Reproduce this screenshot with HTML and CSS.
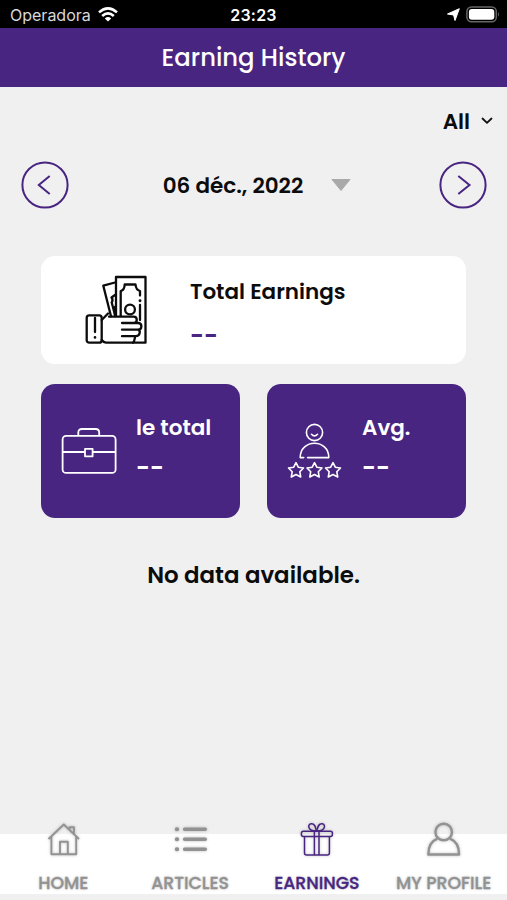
FILE: index.html
```html
<!DOCTYPE html>
<html lang="fr">
<head>
    <meta charset="UTF-8">
    <meta name="viewport" content="width=device-width, initial-scale=1.0">
    <title>Earning History</title>
    <link rel="stylesheet" href="styles.css">
</head>
<body>

    <!-- Status bar -->
    <div class="status-bar">
        <div class="carrier">
            <span class="carrier-name">Operadora</span>
            <svg width="20" height="15" viewBox="0 0 20 15" fill="none" stroke="#fff" stroke-width="2.6">
                <path d="M1 5.4 Q10 -2.6 19 5.4"/>
                <path d="M4.2 9 Q10 3.8 15.8 9"/>
                <path d="M10 14.6 L6.8 11.4 Q10 8.8 13.2 11.4 Z" fill="#fff" stroke="none"/>
            </svg>
        </div>
        <span class="time">23:23</span>
        <div class="status-icons">
            <svg width="13" height="13" viewBox="0 0 13 13">
                <path d="M12.3 0.7 L8 12.5 L6.6 7 L0.5 6 Z" fill="#fff" stroke="#fff" stroke-width="1" stroke-linejoin="round"/>
            </svg>
            <svg width="34" height="17" viewBox="0 0 34 17">
                <rect x="0.9" y="1" width="29.4" height="14.8" rx="4.5" fill="none" stroke="#656565" stroke-width="1.5"/>
                <rect x="2.9" y="3" width="25.4" height="10.8" rx="3" fill="#fff"/>
                <path d="M32 6 Q34 8.4 32 10.8 Z" fill="#656565"/>
            </svg>
        </div>
    </div>

    <!-- Header -->
    <header class="header">
        <h1>Earning History</h1>
    </header>

    <main class="content">
        <div class="filter">
            <span class="filter-text">All</span>
            <svg width="12" height="8" viewBox="0 0 12 8" fill="none" stroke="#111" stroke-width="1.8" stroke-linecap="round" stroke-linejoin="round">
                <path d="M1.5 1.5 L6 5.8 L10.5 1.5"/>
            </svg>
        </div>

        <!-- Date navigation -->
        <div class="date-row">
            <button class="arrow-button">
                <svg width="48" height="48" viewBox="0 0 48 48">
                    <circle cx="24" cy="24" r="22.6"/>
                    <path d="M28.7 15 L17.8 24 L28.7 33"/>
                </svg>
            </button>
            <div class="date">
                <span class="date-text">06 déc., 2022</span>
                <svg width="20" height="12" viewBox="0 0 20 12">
                    <path d="M1 0.5 H19 L10 11.5 Z" fill="#a9a9a9" stroke="#a9a9a9" stroke-linejoin="round"/>
                </svg>
            </div>
            <button class="arrow-button">
                <svg width="48" height="48" viewBox="0 0 48 48">
                    <circle cx="24" cy="24" r="22.6"/>
                    <path d="M19.3 15 L30.5 24 L19.3 33"/>
                </svg>
            </button>
        </div>

        <!-- Totals -->
        <div class="total-card">
            <svg class="money-icon" width="64" height="72" viewBox="0 0 64 72" fill="none" stroke="#0c0c0c" stroke-width="2.3" stroke-linecap="round" stroke-linejoin="round">
                <path d="M32 42 V3 H61.5 V68.7 H22 Q19.5 68.5 17.7 66"/>
                <path d="M36.7 42 V17 Q40.5 16 40.7 10.5 H51.5 Q52 16 56 17 V21.5"/>
                <path d="M56 31 V46"/>
                <path d="M56 26.6 V26.8" stroke-width="2.8"/>
                <circle cx="46" cy="35.5" r="4.9"/>
                <path d="M31 8.5 L19.3 11.7 L27 42.3"/>
                <path d="M31 21 L27.5 23.5 Q29.5 26 27.7 28.5 L31 41"/>
                <path d="M31 33 V41"/>
                <path d="M17.7 46 L24 39.5"/>
                <path d="M25 42.7 H49.5 C54 42.7 53.5 49 50 49 H38 M50 49 H54 C58.5 49 58.5 55.7 54 55.7 H38 M54 55.7 C57 56.5 56 62.2 52 62.2 H38 M52 62.2 C50 62.5 51.5 66.5 49 68.7"/>
                <rect x="2.7" y="41.4" width="15" height="27.3" rx="2.5"/>
                <path d="M11 44 V58"/>
                <path d="M11 63.3 V63.5" stroke-width="2.6"/>
            </svg>
            <div class="total-info">
                <div class="label">Total Earnings</div>
                <div class="value purple">--</div>
            </div>
        </div>

        <div class="small-cards">
            <div class="small-card">
                <svg width="56" height="48" viewBox="0 0 56 48" fill="none" stroke="#fff" stroke-width="1.8" stroke-linejoin="round">
                    <rect x="1.6" y="8.9" width="53" height="37" rx="3.5"/>
                    <path d="M17.3 8.7 V5.5 Q17.3 2 21 2 H34.5 Q38.2 2 38.2 5.5 V8.7"/>
                    <path d="M1.3 25 H23.7 M32 25 H54.7"/>
                    <rect x="24" y="21.9" width="7.6" height="7.4"/>
                </svg>
                <div class="small-info">
                    <div class="label">le total</div>
                    <div class="value">--</div>
                </div>
            </div>
            <div class="small-card">
                <svg width="56" height="56" viewBox="0 0 56 56" fill="none" stroke="#fff" stroke-width="1.6" stroke-linecap="round" stroke-linejoin="round">
                    <circle cx="27.5" cy="9.5" r="8.1"/>
                    <path d="M24.5 11.3 Q27.5 14.5 30.5 11.3"/>
                    <path d="M16.7 34.6 H13.2 C13.2 15.5 41.8 15.5 41.8 34.6 H20.6"/>
                    <path id="star" d="M9 39.6 L11.3 44.2 L16.5 45 L12.8 48.7 L13.7 54 L9 51.5 L4.3 54 L5.2 48.7 L1.5 45 L6.7 44.2 Z"/>
                    <use href="#star" x="18.5"/>
                    <use href="#star" x="37"/>
                </svg>
                <div class="small-info">
                    <div class="label">Avg.</div>
                    <div class="value">--</div>
                </div>
            </div>
        </div>

        <p class="no-data">No data available.</p>
    </main>

    <!-- Bottom tabs -->
    <nav class="tabs">
        <a class="tab">
            <svg width="36" height="36" viewBox="0 0 36 36" fill="none" stroke="currentColor" stroke-width="1.9" stroke-linejoin="round">
                <path d="M3.5 18 L18.8 3.5 L34 18"/>
                <path d="M6.4 16 V33.3 H31.2 V16"/>
                <path d="M15 33.3 V20.7 H22.8 V33.3"/>
                <path d="M24.5 8.2 V6.2 H29 V12.7"/>
            </svg>
            <span>HOME</span>
        </a>
        <a class="tab">
            <svg width="36" height="36" viewBox="0 0 36 36" fill="none" stroke="currentColor" stroke-width="3.5" stroke-linecap="round">
                <path d="M12.6 8.3 H33.3 M12.6 18.3 H33.3 M12.6 28.3 H33.3"/>
                <path d="M4.8 8.3 H5.2 M4.8 18.3 H5.2 M4.8 28.3 H5.2" stroke-width="4"/>
            </svg>
            <span>ARTICLES</span>
        </a>
        <a class="tab active">
            <svg width="36" height="36" viewBox="0 0 36 36" fill="none" stroke="currentColor" stroke-width="1.5" stroke-linejoin="round">
                <rect x="2.4" y="10.2" width="31" height="5.2" rx="2"/>
                <path d="M5.5 15.4 V32 Q5.5 34 7.5 34 H28.4 Q30.4 34 30.4 32 V15.4"/>
                <path d="M15.4 10.4 V34 M20 10.4 V34"/>
                <path d="M17 10 C8.5 10 8.2 3.3 12.2 2.7 C16 2.3 16.5 6.3 17.5 10"/>
                <path d="M18.4 10 C26.6 10 27 3.3 23.2 2.7 C19.2 2.3 18.7 6.3 17.8 10"/>
            </svg>
            <span>EARNINGS</span>
        </a>
        <a class="tab">
            <svg width="36" height="36" viewBox="0 0 36 36" fill="none" stroke="currentColor" stroke-width="2.4" stroke-linejoin="round">
                <circle cx="17.7" cy="11" r="8.3"/>
                <path d="M11.5 17.7 C5.5 20 2.3 25.5 2.3 33.5 H33.1 C33.1 25.5 29.9 20 23.9 17.7"/>
            </svg>
            <span>MY PROFILE</span>
        </a>
    </nav>

</body>
</html>
```

FILE: styles.css
```css
* {
    box-sizing: border-box;
}
body {
    margin: 0;
    height: 900px;
    display: flex;
    flex-direction: column;
    font-family: "Poppins", "Inter", sans-serif;
    background: #f0f0f0;
    color: #0c0c0c;
    overflow: hidden;
}
svg {
    display: block;
    flex: none;
}
span, h1, .label, .no-data {
    white-space: nowrap;
}
.status-bar {
    height: 28px;
    background: #000;
    color: #fff;
    display: grid;
    grid-template-columns: 1fr auto 1fr;
    align-items: center;
    padding: 1px 7px 0 10px;
}
.carrier {
    display: flex;
    align-items: center;
    gap: 7px;
}
.carrier-name {
    font-family: "Inter", sans-serif;
    font-size: 16px;
    color: #d8d8d8;
}
.time {
    font-family: "Inter", sans-serif;
    font-size: 16px;
    font-weight: 600;
    letter-spacing: 0.2px;
    margin-right: 3px;
}
.status-icons {
    display: flex;
    justify-content: flex-end;
    align-items: center;
    gap: 6px;
}
.header {
    height: 59px;
    background: #492582;
    color: #fff;
    display: flex;
    justify-content: center;
    align-items: center;
}
h1 {
    margin: 0;
    font-size: 24.3px;
    font-weight: 500;
}
.content {
    flex: 1;
}
.filter {
    height: 68px;
    display: flex;
    justify-content: flex-end;
    align-items: center;
    gap: 11px;
    padding-right: 14px;
    font-size: 21.5px;
    font-weight: 600;
}
.date-row {
    height: 60px;
    display: flex;
    justify-content: space-between;
    align-items: center;
    padding: 0 20px 0 21px;
}
.arrow-button {
    padding: 0;
    border: none;
    background: none;
}
.arrow-button svg {
    fill: none;
    stroke: #492582;
    stroke-width: 2;
}
.date {
    display: flex;
    align-items: center;
    gap: 28px;
    margin-left: 6px;
    font-size: 21.5px;
    font-weight: 600;
}
.total-card {
    height: 108px;
    margin: 41px 41px 0;
    padding-left: 43px;
    background: #fff;
    border-radius: 14px;
    display: flex;
    align-items: center;
}
.total-info {
    margin-left: 42px;
    padding-top: 8px;
}
.label {
    font-size: 21.5px;
    font-weight: 600;
    line-height: 30px;
}
.value {
    margin-top: 10px;
    font-size: 24px;
    font-weight: 600;
    line-height: 30px;
}
.purple {
    margin-top: 14px;
    color: #492582;
}
.small-cards {
    display: grid;
    grid-template-columns: 1fr 1fr;
    gap: 27px;
    margin: 20px 41px 0;
}
.small-card {
    height: 134px;
    padding: 0 0 0 20px;
    background: #492582;
    border-radius: 14px;
    color: #fff;
    display: flex;
    align-items: center;
}
.small-info {
    margin-left: 19px;
    padding-bottom: 6px;
}
.no-data {
    margin: 42px 0 0;
    text-align: center;
    font-size: 22.9px;
    font-weight: 600;
    line-height: 30px;
}
.tabs {
    height: 66px;
    background: linear-gradient(#fff 60px, #f0f0f0 60px);
    display: grid;
    grid-template-columns: repeat(4, 1fr);
}
.tab {
    height: 72px;
    margin-top: -13px;
    display: flex;
    flex-direction: column;
    align-items: center;
    gap: 14px;
    color: #929292;
    font-size: 17.3px;
    font-weight: 500;
    line-height: 24px;
    text-shadow: 0 0 3px rgba(0, 0, 0, 0.25);
    -webkit-text-stroke: 0.3px currentColor;
}
.tab svg {
    filter: drop-shadow(0 0 1.5px rgba(0, 0, 0, 0.25));
}
.active {
    color: #492582;
}
```
